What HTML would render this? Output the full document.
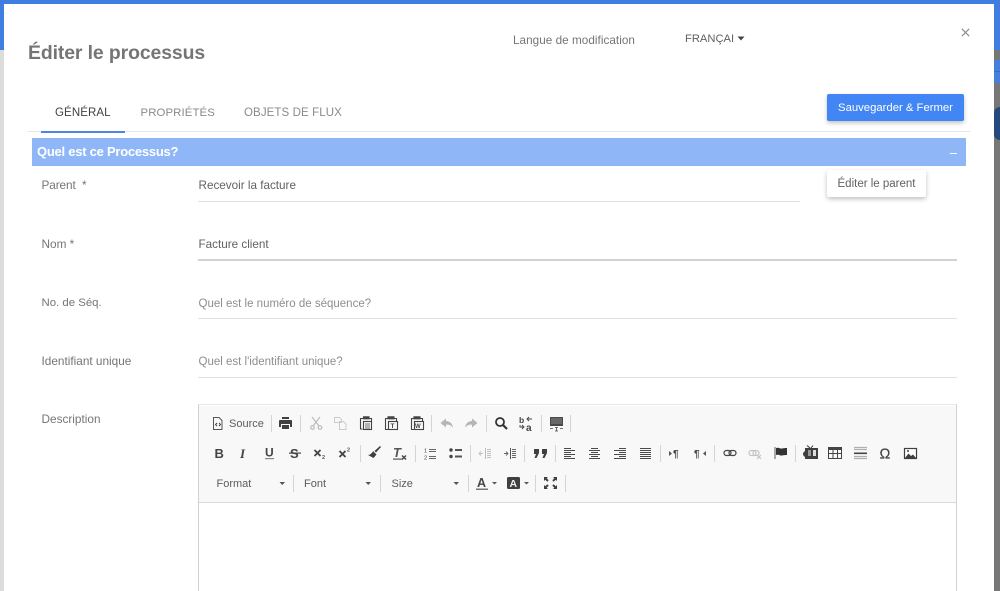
<!DOCTYPE html>
<html lang="fr"><head><meta charset="utf-8"><title>Éditer le processus</title>
<style>
html,body{margin:0;padding:0;width:1000px;height:591px;overflow:hidden;background:#777;font-family:"Liberation Sans",sans-serif}
#w{position:absolute;left:0;top:0;width:1000px;height:591px;overflow:hidden;filter:blur(.3px)}
.a{position:absolute;white-space:nowrap}
.t{line-height:14px;height:14px}
.lb{font-size:11.800px;color:#757575}
.v{font-size:11.700px;color:#616161}
.ph{font-size:11.500px;color:#8e8e8e}
.ln{position:absolute;left:198px;height:1px;background:#e0e0e0}
#tb svg text{font-family:"Liberation Sans",sans-serif}
</style></head><body><div id="w">
<div class="a" style="left:0;top:0;width:1000px;height:50px;background:#3f7de0"></div>
<div class="a" style="left:0;top:50px;width:4px;height:541px;background:#dcdcdc"></div>
<div class="a" style="left:994px;top:60px;width:6px;height:23px;background:#4480dc"></div>
<div class="a" style="left:994px;top:71px;width:6px;height:1px;background:#3a6fc0"></div>
<div class="a" style="left:994px;top:107px;width:6px;height:33px;background:#23497f;border-radius:8px 0 0 8px"></div>
<div class="a" style="left:4px;top:4px;width:990px;height:587px;background:#fff"></div>

<div class="a" style="left:28px;top:41px;font-size:19.400px;line-height:25px;font-weight:bold;color:#757575;letter-spacing:-.1px">Éditer le processus</div>
<div class="a t" style="left:513px;top:34px;font-size:11.700px;color:#757575;letter-spacing:.05px">Langue de modification</div>
<div class="a t" style="left:685px;top:31.500px;font-size:11.200px;color:#616161">FRANÇAI</div>
<svg class="a" style="left:737px;top:36px" width="8" height="5"><path d="M0.500 0.500h7L4 4.500z" fill="#444"/></svg>
<svg class="a" style="left:961px;top:28px" width="9" height="9"><path d="M.8.800l7.400 7.400M8.200.800L.8 8.200" stroke="#8f8f8f" stroke-width="1.200"/></svg>

<div class="a t" style="left:55px;top:106px;font-size:11.500px;color:#424242;letter-spacing:.1px">GÉNÉRAL</div>
<div class="a t" style="left:140.500px;top:106px;font-size:11.400px;color:#8a8a8a;letter-spacing:.1px">PROPRIÉTÉS</div>
<div class="a t" style="left:244px;top:106px;font-size:11.500px;color:#8a8a8a;letter-spacing:.1px">OBJETS DE FLUX</div>
<div class="a" style="left:28px;top:131px;width:942px;height:1px;background:#e6e6e6"></div>
<div class="a" style="left:41px;top:131px;width:84px;height:2px;background:#4a86e8"></div>

<div class="a" style="left:827px;top:94px;width:137px;height:27px;background:#4285f4;border-radius:2px;box-shadow:0 2px 4px rgba(0,0,0,.25);color:#fff;font-size:11.300px;line-height:28px;text-align:center">Sauvegarder &amp; Fermer</div>

<div class="a" style="left:32px;top:138px;width:934px;height:28px;background:#8fb7f7"></div>
<div class="a" style="left:37px;top:144px;font-size:13px;line-height:15px;font-weight:bold;color:#fff;letter-spacing:-.25px">Quel est ce Processus?</div>
<div class="a" style="left:950px;top:153px;width:7px;height:1px;background:#fff"></div>

<div class="a" style="left:827px;top:170px;width:99px;height:27px;background:#fff;border-radius:2px;box-shadow:0 2px 5px rgba(0,0,0,.25);color:#616161;font-size:11.500px;line-height:28px;text-align:center">Éditer le parent</div>

<div class="a t lb" style="left:41.500px;top:178px;letter-spacing:-.1px">Parent &nbsp;*</div>
<div class="a t v" style="left:198.500px;top:179px">Recevoir la facture</div>
<div class="ln" style="top:201px;width:602px"></div>

<div class="a t lb" style="left:41.500px;top:237px">Nom *</div>
<div class="a t v" style="left:198.500px;top:238px">Facture client</div>
<div class="ln" style="top:259px;width:759px;height:2px;background:#d2d2d2"></div>

<div class="a t lb" style="left:41.500px;top:296px;font-size:11.400px">No. de Séq.</div>
<div class="a t ph" style="left:198.500px;top:297px">Quel est le numéro de séquence?</div>
<div class="ln" style="top:318px;width:759px"></div>

<div class="a t lb" style="left:41.500px;top:354px">Identifiant unique</div>
<div class="a t ph" style="left:198.500px;top:355px">Quel est l'identifiant unique?</div>
<div class="ln" style="top:377px;width:759px"></div>

<div class="a t lb" style="left:41.500px;top:412px">Description</div>

<div class="a" style="left:198px;top:404px;width:759px;height:187px;background:#fff;box-sizing:border-box;border:1px solid #d1d1d1;border-top-color:#e6e6e6;border-bottom:0"></div>
<div class="a" style="left:199px;top:406px;width:757px;height:96px;background:#f8f8f8;border-bottom:1px solid #d9d9d9"></div>

<svg id="tb" class="a" style="left:0;top:0" width="1000" height="591" viewBox="0 0 1000 591">
<g fill="#d4d4d4">
<rect x="271" y="415" width="1" height="17"/><rect x="300" y="415" width="1" height="17"/><rect x="431" y="415" width="1" height="17"/><rect x="486" y="415" width="1" height="17"/><rect x="541" y="415" width="1" height="17"/><rect x="570" y="415" width="1" height="17"/>
<rect x="360" y="445" width="1" height="17"/><rect x="415" y="445" width="1" height="17"/><rect x="470" y="445" width="1" height="17"/><rect x="524" y="445" width="1" height="17"/><rect x="555" y="445" width="1" height="17"/><rect x="660" y="445" width="1" height="17"/><rect x="714" y="445" width="1" height="17"/><rect x="795" y="445" width="1" height="17"/>
<rect x="293" y="475" width="1" height="17"/><rect x="380" y="475" width="1" height="17"/><rect x="468" y="475" width="1" height="17"/><rect x="535" y="475" width="1" height="17"/><rect x="565" y="475" width="1" height="17"/>
</g>

<!-- row 1 -->
<path d="M213.500 417.500h5.500l3 3v9h-8.500z" fill="none" stroke="#555" stroke-width="1"/>
<path d="M217 423l-1.500 1.500 1.500 1.500M219 423l1.500 1.500-1.500 1.500" fill="none" stroke="#333" stroke-width=".9"/>
<text x="229" y="427" font-size="11" fill="#5c5c5c">Source</text>
<path d="M282 417h7v2h-7zM280 420h11a1 1 0 0 1 1 1v6h-2v-3h-9v3h-2v-6a1 1 0 0 1 1-1zM282 425h7v4h-7z" fill="#3f3f3f"/>
<g stroke="#bbb" fill="none" stroke-width="1.200"><path d="M312 417l7 9M320 417l-7 9"/><circle cx="312.500" cy="427.500" r="1.800"/><circle cx="320" cy="427.500" r="1.800"/></g>
<g stroke="#ccc" fill="none" stroke-width="1"><path d="M334.500 417.500h5l2 2v3h-7zM339.500 421.500h4l2.500 2.500v5.500h-6.500z"/></g>
<g stroke="#444" fill="none" stroke-width="1.100"><path d="M363 418.500h-2.500v10.500h2M369 418.500h2.500v3"/><rect x="363.500" y="421.500" width="8" height="8"/><path d="M363.500 416.800h5.500v2h-5.500z" fill="#444"/><path d="M365 424h5M365 426h5M365 428h5" stroke-width=".8"/></g>
<g stroke="#444" fill="none" stroke-width="1.100"><path d="M388 418.500h-2.500v11h3M394 418.500h2.500v3"/><path d="M388 416.800h6v2h-6z" fill="#444"/><rect x="388.500" y="421.500" width="9" height="8"/></g><text x="390.500" y="428" font-size="6.500" font-weight="bold" fill="#444">T</text>
<g stroke="#444" fill="none" stroke-width="1.100"><path d="M414 418.500h-2.500v11h3M420 418.500h2.500v3"/><path d="M414 416.800h6v2h-6z" fill="#444"/><rect x="414.500" y="421.500" width="9" height="8"/></g><text x="415" y="428" font-size="6" font-weight="bold" fill="#444">W</text>
<path d="M446 418.500l-5.500 4.500 5.500 4.500v-2.800c3-.2 5 .5 7 3-.5-4-3-6.500-7-6.700z" fill="#b5b5b5"/>
<path d="M472 418.500l5.500 4.500-5.500 4.500v-2.800c-3-.2-5 .5-7 3 .5-4 3-6.500 7-6.700z" fill="#b5b5b5"/>
<circle cx="500" cy="422" r="4" fill="none" stroke="#333" stroke-width="1.800"/><path d="M503 425l4 4" stroke="#333" stroke-width="2.200"/>
<text x="519" y="423" font-size="8.500" font-weight="bold" fill="#444">b</text><text x="526" y="431" font-size="10" font-weight="bold" fill="#444">a</text>
<path d="M532 419h-5m2-2l-2 2 2 2M520 425v2h4m-2-2l2 2-2 2" stroke="#444" fill="none" stroke-width=".9"/>
<rect x="550" y="417" width="13" height="9" fill="#4a4a4a"/><path d="M551 419h11M551 421h11M551 423h11" stroke="#999" stroke-width=".7"/><path d="M550 428.500h3M560 428.500h3M555 427.500h3M556.500 427.500v3.500M555 431h3" stroke="#444" stroke-width=".8" fill="none"/>

<!-- row 2 -->
<text x="214.500" y="458" font-size="13" font-weight="bold" fill="#444">B</text>
<text x="240" y="458" font-size="13" font-style="italic" font-weight="bold" style="font-family:'Liberation Serif'" fill="#444">I</text>
<text x="265" y="456.500" font-size="12" font-weight="bold" fill="#444">U</text><rect x="265" y="458" width="9" height="1.200" fill="#888"/>
<text x="290" y="458" font-size="13" font-weight="bold" fill="#444">S</text><rect x="289" y="452.500" width="12" height="1.200" fill="#444"/>
<path d="M314.500 450l6 6M320.500 450l-6 6" stroke="#444" stroke-width="1.800"/><text x="322" y="459" font-size="5.500" font-weight="bold" fill="#555">2</text>
<path d="M339.500 451l6 6M345.500 451l-6 6" stroke="#444" stroke-width="1.800"/><text x="347" y="451.500" font-size="5.500" font-weight="bold" fill="#555">2</text>
<path d="M380 446l1 1-5 5.500-1.500-1.500zM373 451l3.500 3.500-3 3.500-5.500-3c2 0 3.500-1.500 5.500-4z" fill="#3f3f3f"/>
<text x="393" y="457" font-size="13" font-weight="bold" font-style="italic" fill="#555">T</text><rect x="393" y="458.500" width="9" height="1.200" fill="#555"/><path d="M402 455.500l4 4M406 455.500l-4 4" stroke="#444" stroke-width="1.400"/>
<text x="424" y="452.500" font-size="5.500" fill="#444">1</text><text x="424" y="459.500" font-size="5.500" fill="#444">2</text><path d="M429 449.500h7M429 451.500h7M429 456.500h7M429 458.500h7" stroke="#666" stroke-width="1"/>
<circle cx="451" cy="450" r="1.700" fill="#444"/><circle cx="451" cy="456.500" r="1.700" fill="#444"/><path d="M455 449h7v2h-7zM455 455.500h7v2h-7z" fill="#555"/>
<path d="M485.500 448v11" stroke="#bbb" stroke-width="1"/><path d="M487 449.500h4M487 451.500h4M487 453.500h4M487 455.500h4M487 457.500h4M479 453.500h4M481 451.500l-2 2 2 2" stroke="#c0c0c0" fill="none" stroke-width=".9"/>
<path d="M510.500 448v11" stroke="#555" stroke-width="1"/><path d="M512 449.500h4M512 451.500h4M512 453.500h4M512 455.500h4M512 457.500h4M504 453.500h4M506 451.500l2 2-2 2" stroke="#666" fill="none" stroke-width=".9"/>
<path d="M534 449h5v4l-2.500 5h-2l1.500-4h-2zM542 449h5v4l-2.500 5h-2l1.500-4h-2z" fill="#3f3f3f"/>
<g stroke="#4a4a4a" stroke-width="1"><path d="M564 448.500h7M564 450.500h11M564 452.500h7M564 454.500h11M564 456.500h7M564 458.500h11"/>
<path d="M591 448.500h7M589 450.500h11M591 452.500h7M589 454.500h11M591 456.500h7M589 458.500h11"/>
<path d="M619 448.500h7M614 450.500h12M619 452.500h7M614 454.500h12M619 456.500h7M614 458.500h12"/>
<path d="M640 448.500h11M640 450.500h11M640 452.500h11M640 454.500h11M640 456.500h11M640 458.500h11"/></g>
<text x="673" y="457" font-size="10" font-weight="bold" fill="#444">¶</text><path d="M669 451l3 2.500-3 2.500z" fill="#555"/>
<text x="694" y="457" font-size="10" font-weight="bold" fill="#444">¶</text><path d="M706 451l-3 2.500 3 2.500z" fill="#555"/>
<rect x="724" y="450.500" width="7" height="5" rx="2.500" fill="none" stroke="#444" stroke-width="1.200"/><rect x="729" y="450.500" width="7" height="5" rx="2.500" fill="none" stroke="#444" stroke-width="1.200"/>
<rect x="749" y="450.500" width="7" height="5" rx="2.500" fill="none" stroke="#c4c4c4" stroke-width="1.200"/><rect x="753" y="450.500" width="6" height="5" rx="2.500" fill="none" stroke="#c4c4c4" stroke-width="1.200"/><path d="M757 455l4 4M761 455l-4 4" stroke="#c4c4c4" stroke-width="1.200"/>
<path d="M775 447v12" stroke="#777" stroke-width="1.200"/><path d="M776 448c3-1 4 1 6 .5s3-.5 5-.5v7c-2 0-3 0-5 .5s-3-1.500-6-.5z" fill="#333"/>
<rect x="805" y="448" width="13" height="11" fill="#3f3f3f"/><circle cx="806" cy="454" r="3" fill="#3f3f3f"/><path d="M807 445.500l3 2.500M813 445.500l-2 2.500" stroke="#333"/><rect x="813" y="450" width="3" height="6" fill="#ddd"/><rect x="808" y="450" width="3" height="6" fill="#999"/>
<rect x="828.500" y="447.500" width="13" height="11" fill="none" stroke="#444"/><rect x="828.500" y="447.500" width="13" height="2.500" fill="#444"/><path d="M833 450v8M837.500 450v8M829 453.500h12" stroke="#444"/>
<path d="M854 447.500h13M854 449.500h13M854 456.500h13M854 458.500h13" stroke="#b0b0b0" stroke-width="1.200"/><rect x="854" y="452.500" width="13" height="1.600" fill="#444"/>
<text x="879.500" y="458.500" font-size="14.500" fill="#444" stroke="#444" stroke-width=".2">Ω</text>
<rect x="904.500" y="448.500" width="12" height="10" fill="#fff" stroke="#3f3f3f" stroke-width="1.200"/><path d="M905 458l3.500-4.500 2.500 2.500 2-1.500 3 3.500z" fill="#3f3f3f"/><circle cx="908" cy="451" r="1" fill="#3f3f3f"/>

<!-- row 3 -->
<text x="216.500" y="487" font-size="11" fill="#5c5c5c">Format</text><path d="M279.500 482h5.500l-2.750 3z" fill="#555"/>
<text x="304" y="487" font-size="11" fill="#5c5c5c">Font</text><path d="M365.500 482h5.500l-2.750 3z" fill="#555"/>
<text x="391.500" y="487" font-size="11" fill="#5c5c5c">Size</text><path d="M453.500 482h5.500l-2.750 3z" fill="#555"/>
<text x="477" y="487" font-size="12.500" font-weight="bold" fill="#444">A</text><rect x="476" y="488.500" width="12" height="1.500" fill="#777"/><path d="M492 482h5l-2.500 2.500z" fill="#555"/>
<rect x="507" y="477" width="13" height="12" rx="1.500" fill="#3f3f3f"/><text x="509.500" y="487" font-size="10.500" font-weight="bold" fill="#eee">A</text><path d="M524 482h5l-2.500 2.500z" fill="#555"/>
<path d="M544 477h4l-1.300 1.300 2 2-1.400 1.400-2-2L544 481zM557 477h-4l1.300 1.300-2 2 1.400 1.400 2-2L557 481zM544 489h4l-1.300-1.300 2-2-1.400-1.400-2 2L544 485zM557 489h-4l1.300-1.300-2-2 1.400-1.400 2 2L557 485z" fill="#3f3f3f"/>
</svg>
</div></body></html>
